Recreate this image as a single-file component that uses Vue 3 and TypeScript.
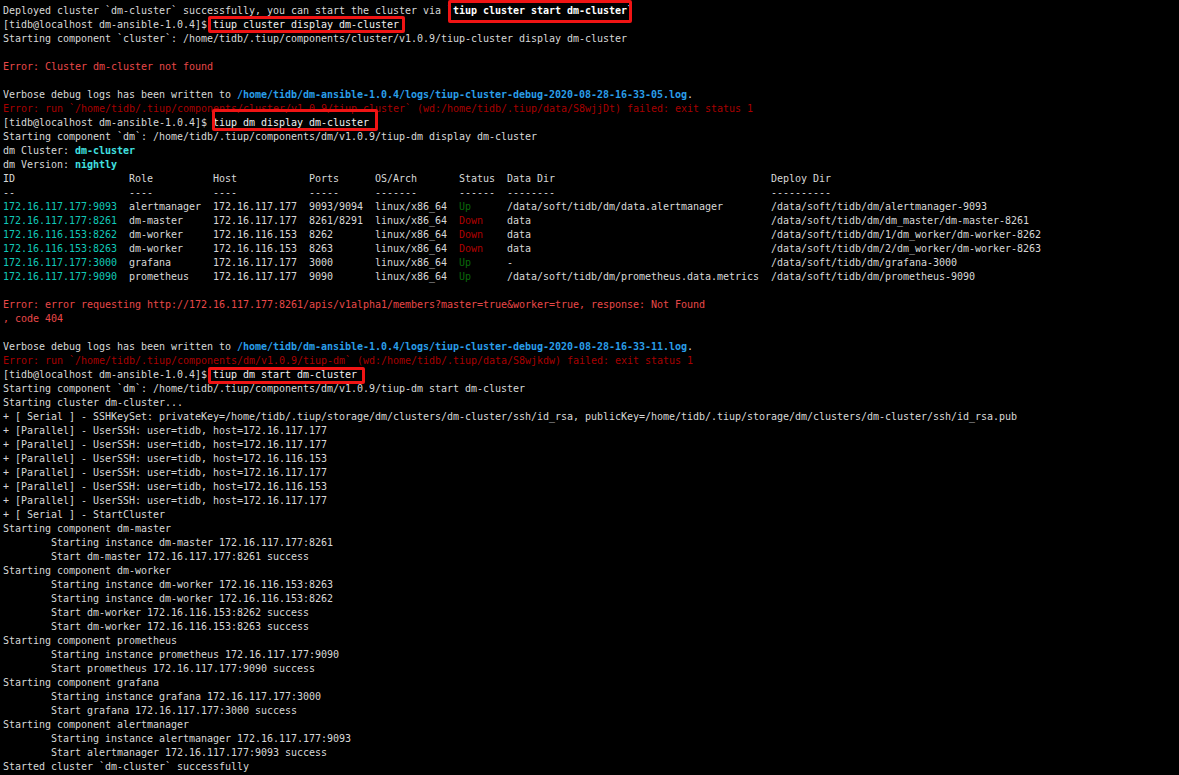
<script setup lang="ts">
type Seg = { t: string; c?: string };
type Line = Seg[];
const p = (s: string): Line => [{ t: s }];
const prompt = '[tidb@localhost dm-ansible-1.0.4]$ ';

const rows = [
  ['172.16.117.177:9093', 'alertmanager', '172.16.117.177', '9093/9094', 'Up', '/data/soft/tidb/dm/data.alertmanager', '/data/soft/tidb/dm/alertmanager-9093'],
  ['172.16.117.177:8261', 'dm-master', '172.16.117.177', '8261/8291', 'Down', 'data', '/data/soft/tidb/dm/dm_master/dm-master-8261'],
  ['172.16.116.153:8262', 'dm-worker', '172.16.116.153', '8262', 'Down', 'data', '/data/soft/tidb/dm/1/dm_worker/dm-worker-8262'],
  ['172.16.116.153:8263', 'dm-worker', '172.16.116.153', '8263', 'Down', 'data', '/data/soft/tidb/dm/2/dm_worker/dm-worker-8263'],
  ['172.16.117.177:3000', 'grafana', '172.16.117.177', '3000', 'Up', '-', '/data/soft/tidb/dm/grafana-3000'],
  ['172.16.117.177:9090', 'prometheus', '172.16.117.177', '9090', 'Up', '/data/soft/tidb/dm/prometheus.data.metrics', '/data/soft/tidb/dm/prometheus-9090'],
];

const tableRow = (r: string[]): Line => [
  { t: r[0].padEnd(21), c: 'id' },
  { t: r[1].padEnd(14) + r[2].padEnd(16) + r[3].padEnd(11) + 'linux/x86_64  ' },
  { t: r[4].padEnd(8), c: r[4] === 'Up' ? 'up' : 'down' },
  { t: r[5].padEnd(44) + r[6] },
];

const lines: Line[] = [
  [{ t: 'Deployed cluster `dm-cluster` successfully, you can start the cluster via ' }, { t: '`tiup cluster start dm-cluster`', c: 'box box-a' }],
  [{ t: prompt }, { t: 'tiup cluster display dm-cluster', c: 'box box-b' }],
  p('Starting component `cluster`: /home/tidb/.tiup/components/cluster/v1.0.9/tiup-cluster display dm-cluster'),
  p(''),
  [{ t: 'Error: Cluster dm-cluster not found', c: 'err' }],
  p(''),
  [{ t: 'Verbose debug logs has been written to ' }, { t: '/home/tidb/dm-ansible-1.0.4/logs/tiup-cluster-debug-2020-08-28-16-33-05.log', c: 'path' }, { t: '.' }],
  [{ t: 'Error: run `/home/tidb/.tiup/components/cluster/v1.0.9/tiup-cluster` (wd:/home/tidb/.tiup/data/S8wjjDt) failed: exit status 1', c: 'fail' }],
  [{ t: prompt }, { t: 'tiup dm display dm-cluster', c: 'box box-c' }],
  p('Starting component `dm`: /home/tidb/.tiup/components/dm/v1.0.9/tiup-dm display dm-cluster'),
  [{ t: 'dm Cluster: ' }, { t: 'dm-cluster', c: 'val' }],
  [{ t: 'dm Version: ' }, { t: 'nightly', c: 'val' }],
  p('ID                   Role          Host            Ports      OS/Arch       Status  Data Dir                                    Deploy Dir'),
  p('--                   ----          ----            -----      -------       ------  --------                                    ----------'),
  ...rows.map(tableRow),
  p(''),
  [{ t: 'Error: error requesting http://172.16.117.177:8261/apis/v1alpha1/members?master=true&worker=true, response: Not Found', c: 'err' }],
  [{ t: ', code 404', c: 'err' }],
  p(''),
  [{ t: 'Verbose debug logs has been written to ' }, { t: '/home/tidb/dm-ansible-1.0.4/logs/tiup-cluster-debug-2020-08-28-16-33-11.log', c: 'path' }, { t: '.' }],
  [{ t: 'Error: run `/home/tidb/.tiup/components/dm/v1.0.9/tiup-dm` (wd:/home/tidb/.tiup/data/S8wjkdw) failed: exit status 1', c: 'fail' }],
  [{ t: prompt }, { t: 'tiup dm start dm-cluster', c: 'box box-d' }],
  p('Starting component `dm`: /home/tidb/.tiup/components/dm/v1.0.9/tiup-dm start dm-cluster'),
  p('Starting cluster dm-cluster...'),
  p('+ [ Serial ] - SSHKeySet: privateKey=/home/tidb/.tiup/storage/dm/clusters/dm-cluster/ssh/id_rsa, publicKey=/home/tidb/.tiup/storage/dm/clusters/dm-cluster/ssh/id_rsa.pub'),
  p('+ [Parallel] - UserSSH: user=tidb, host=172.16.117.177'),
  p('+ [Parallel] - UserSSH: user=tidb, host=172.16.117.177'),
  p('+ [Parallel] - UserSSH: user=tidb, host=172.16.116.153'),
  p('+ [Parallel] - UserSSH: user=tidb, host=172.16.117.177'),
  p('+ [Parallel] - UserSSH: user=tidb, host=172.16.116.153'),
  p('+ [Parallel] - UserSSH: user=tidb, host=172.16.117.177'),
  p('+ [ Serial ] - StartCluster'),
  p('Starting component dm-master'),
  p('\tStarting instance dm-master 172.16.117.177:8261'),
  p('\tStart dm-master 172.16.117.177:8261 success'),
  p('Starting component dm-worker'),
  p('\tStarting instance dm-worker 172.16.116.153:8263'),
  p('\tStarting instance dm-worker 172.16.116.153:8262'),
  p('\tStart dm-worker 172.16.116.153:8262 success'),
  p('\tStart dm-worker 172.16.116.153:8263 success'),
  p('Starting component prometheus'),
  p('\tStarting instance prometheus 172.16.117.177:9090'),
  p('\tStart prometheus 172.16.117.177:9090 success'),
  p('Starting component grafana'),
  p('\tStarting instance grafana 172.16.117.177:3000'),
  p('\tStart grafana 172.16.117.177:3000 success'),
  p('Starting component alertmanager'),
  p('\tStarting instance alertmanager 172.16.117.177:9093'),
  p('\tStart alertmanager 172.16.117.177:9093 success'),
  p('Started cluster `dm-cluster` successfully'),
];
</script>

<template>
  <main class="terminal">
    <div v-for="(line, i) in lines" :key="i" class="line">
      <span v-for="(seg, j) in line" :key="j" :class="seg.c">{{ seg.t }}</span>
    </div>
  </main>
</template>

<style>
html,
body {
  margin: 0;
  background: #000;
}
</style>

<style scoped>
.terminal {
  box-sizing: border-box;
  height: 775px;
  overflow: hidden;
  padding: 4px 0 0 3px;
  background: #000;
  color: #d8d8d8;
  font-family: "DejaVu Sans Mono", monospace;
  font-size: 10px;
  letter-spacing: -0.02px;
  line-height: 14px;
}
.line {
  height: 14px;
  white-space: pre;
  tab-size: 8;
}
.id { color: #10c8b8; }
.up { color: #0a6a0a; }
.down { color: #b00000; }
.err { color: #e84848; }
.fail { color: #a80000; }
.path { color: #2a9ee8; font-weight: bold; }
.val { color: #40e0e0; font-weight: bold; }
.box {
  position: relative;
  display: inline-block;
  height: 14px;
  color: #f0f0f0;
}
.box::after {
  content: "";
  position: absolute;
  border: 3px solid #f01414;
  border-radius: 2px;
}
.box-a {
  color: #fff;
  font-weight: bold;
}
.box-a::after { left: 1px; right: 1.5px; top: -4px; bottom: -5px; }
.box-b::after { left: -5px; right: -6px; top: -2px; bottom: -1px; }
.box-c::after { left: -1px; right: -9px; top: -7px; bottom: -1px; }
.box-d::after { left: -5px; right: -8px; top: -1px; bottom: -2px; }
</style>
